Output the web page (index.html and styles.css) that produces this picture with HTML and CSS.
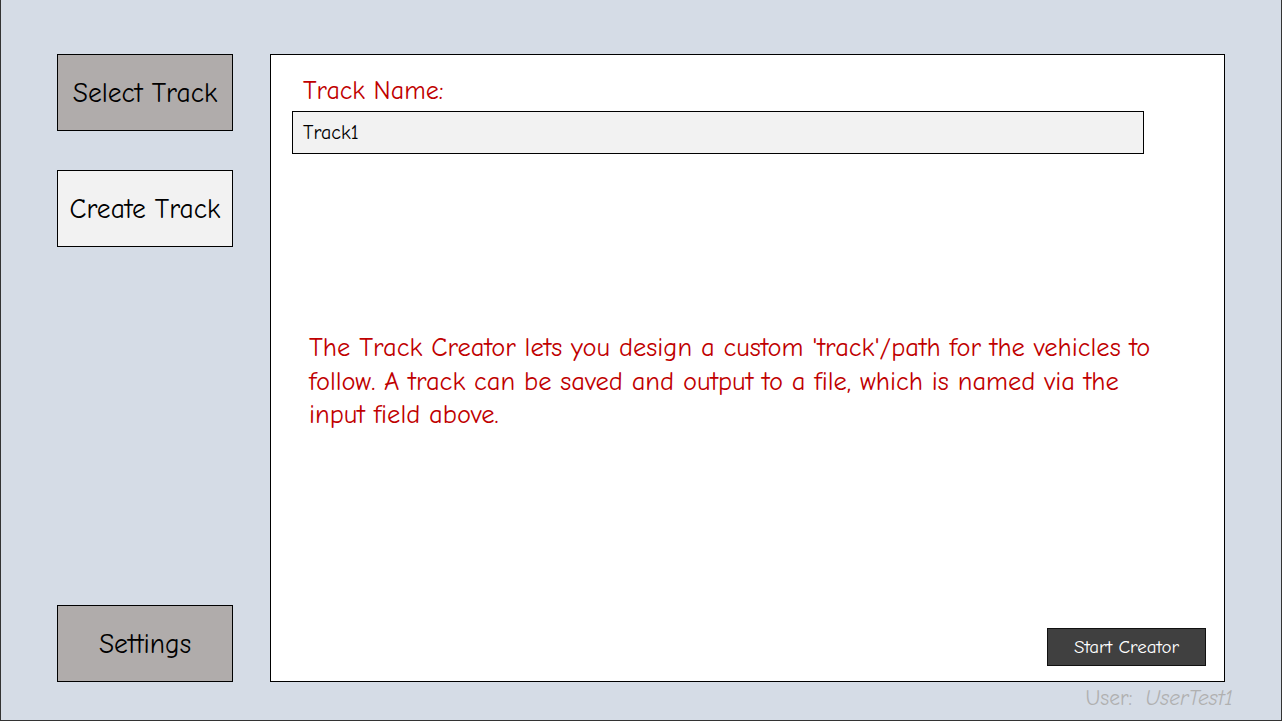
FILE: index.html
```html
<!DOCTYPE html>
<html>
<head>
<meta charset="utf-8">
<link rel="stylesheet" href="styles.css">
</head>
<body>
<div class="app">
  <div class="row">
    <nav class="sidebar">
      <div class="nav-top">
        <div class="nav-btn dark">Select Track</div>
        <div class="nav-btn light">Create Track</div>
      </div>
      <div class="nav-btn dark">Settings</div>
    </nav>
    <main class="panel">
      <div class="label">Track Name:</div>
      <div class="input">Track1</div>
      <p class="desc">The Track Creator lets you design a custom 'track'/path for the vehicles to follow. A track can be saved and output to a file, which is named via the input field above.</p>
      <div class="actions">
        <div class="start-btn">Start Creator</div>
      </div>
    </main>
  </div>
  <div class="footer"><span class="user-label">User:</span><span class="user-name">UserTest1</span></div>
</div>
</body>
</html>
```

FILE: styles.css
```css
html, body {
  margin: 0;
  padding: 0;
}
body {
  background: #d5dce6;
  font-family: "Comic Sans MS", "Comic Neue", "DejaVu Sans", sans-serif;
}
.app {
  box-sizing: border-box;
  width: 1282px;
  height: 721px;
  border-left: 1px solid #333;
  border-right: 1px solid #333;
  border-bottom: 1px solid #333;
  background: #d5dce6;
  padding: 54px 0 0 56px;
}
.row {
  display: flex;
  gap: 37px;
  height: 628px;
}
.sidebar {
  width: 176px;
  display: flex;
  flex-direction: column;
  justify-content: space-between;
}
.nav-top {
  display: flex;
  flex-direction: column;
  gap: 39px;
}
.nav-btn {
  box-sizing: border-box;
  height: 77px;
  border: 1px solid #000;
  display: flex;
  align-items: center;
  justify-content: center;
  font-size: 27.5px;
  color: #000;
}
.nav-btn.dark { background: #b0acab; }
.nav-btn.light { background: #f2f2f2; }
.panel {
  box-sizing: border-box;
  width: 955px;
  background: #fff;
  border: 1px solid #000;
  padding: 21px 18px 15px 21px;
  display: flex;
  flex-direction: column;
}
.label {
  color: #c00000;
  font-size: 26px;
  margin-left: 11px;
  line-height: 30px;
  height: 35px;
}
.input {
  box-sizing: border-box;
  width: 852px;
  height: 43px;
  background: #f2f2f2;
  border: 1px solid #000;
  padding: 0 10px;
  display: flex;
  align-items: center;
  font-size: 20px;
  color: #000;
}
.desc {
  color: #c00000;
  font-size: 26.5px;
  line-height: 33.5px;
  width: 870px;
  margin: 177px 0 0 17px;
}
.actions {
  margin-top: auto;
  display: flex;
  justify-content: flex-end;
}
.start-btn {
  box-sizing: border-box;
  width: 159px;
  height: 38px;
  background: #404040;
  border: 1px solid #111;
  color: #fff;
  font-size: 19px;
  display: flex;
  align-items: center;
  justify-content: center;
}
.footer {
  display: flex;
  justify-content: flex-end;
  gap: 13px;
  padding-right: 48px;
  margin-top: 4px;
  color: #b0b0b0;
  font-size: 21.5px;
}
.user-name { font-style: italic; }
```
